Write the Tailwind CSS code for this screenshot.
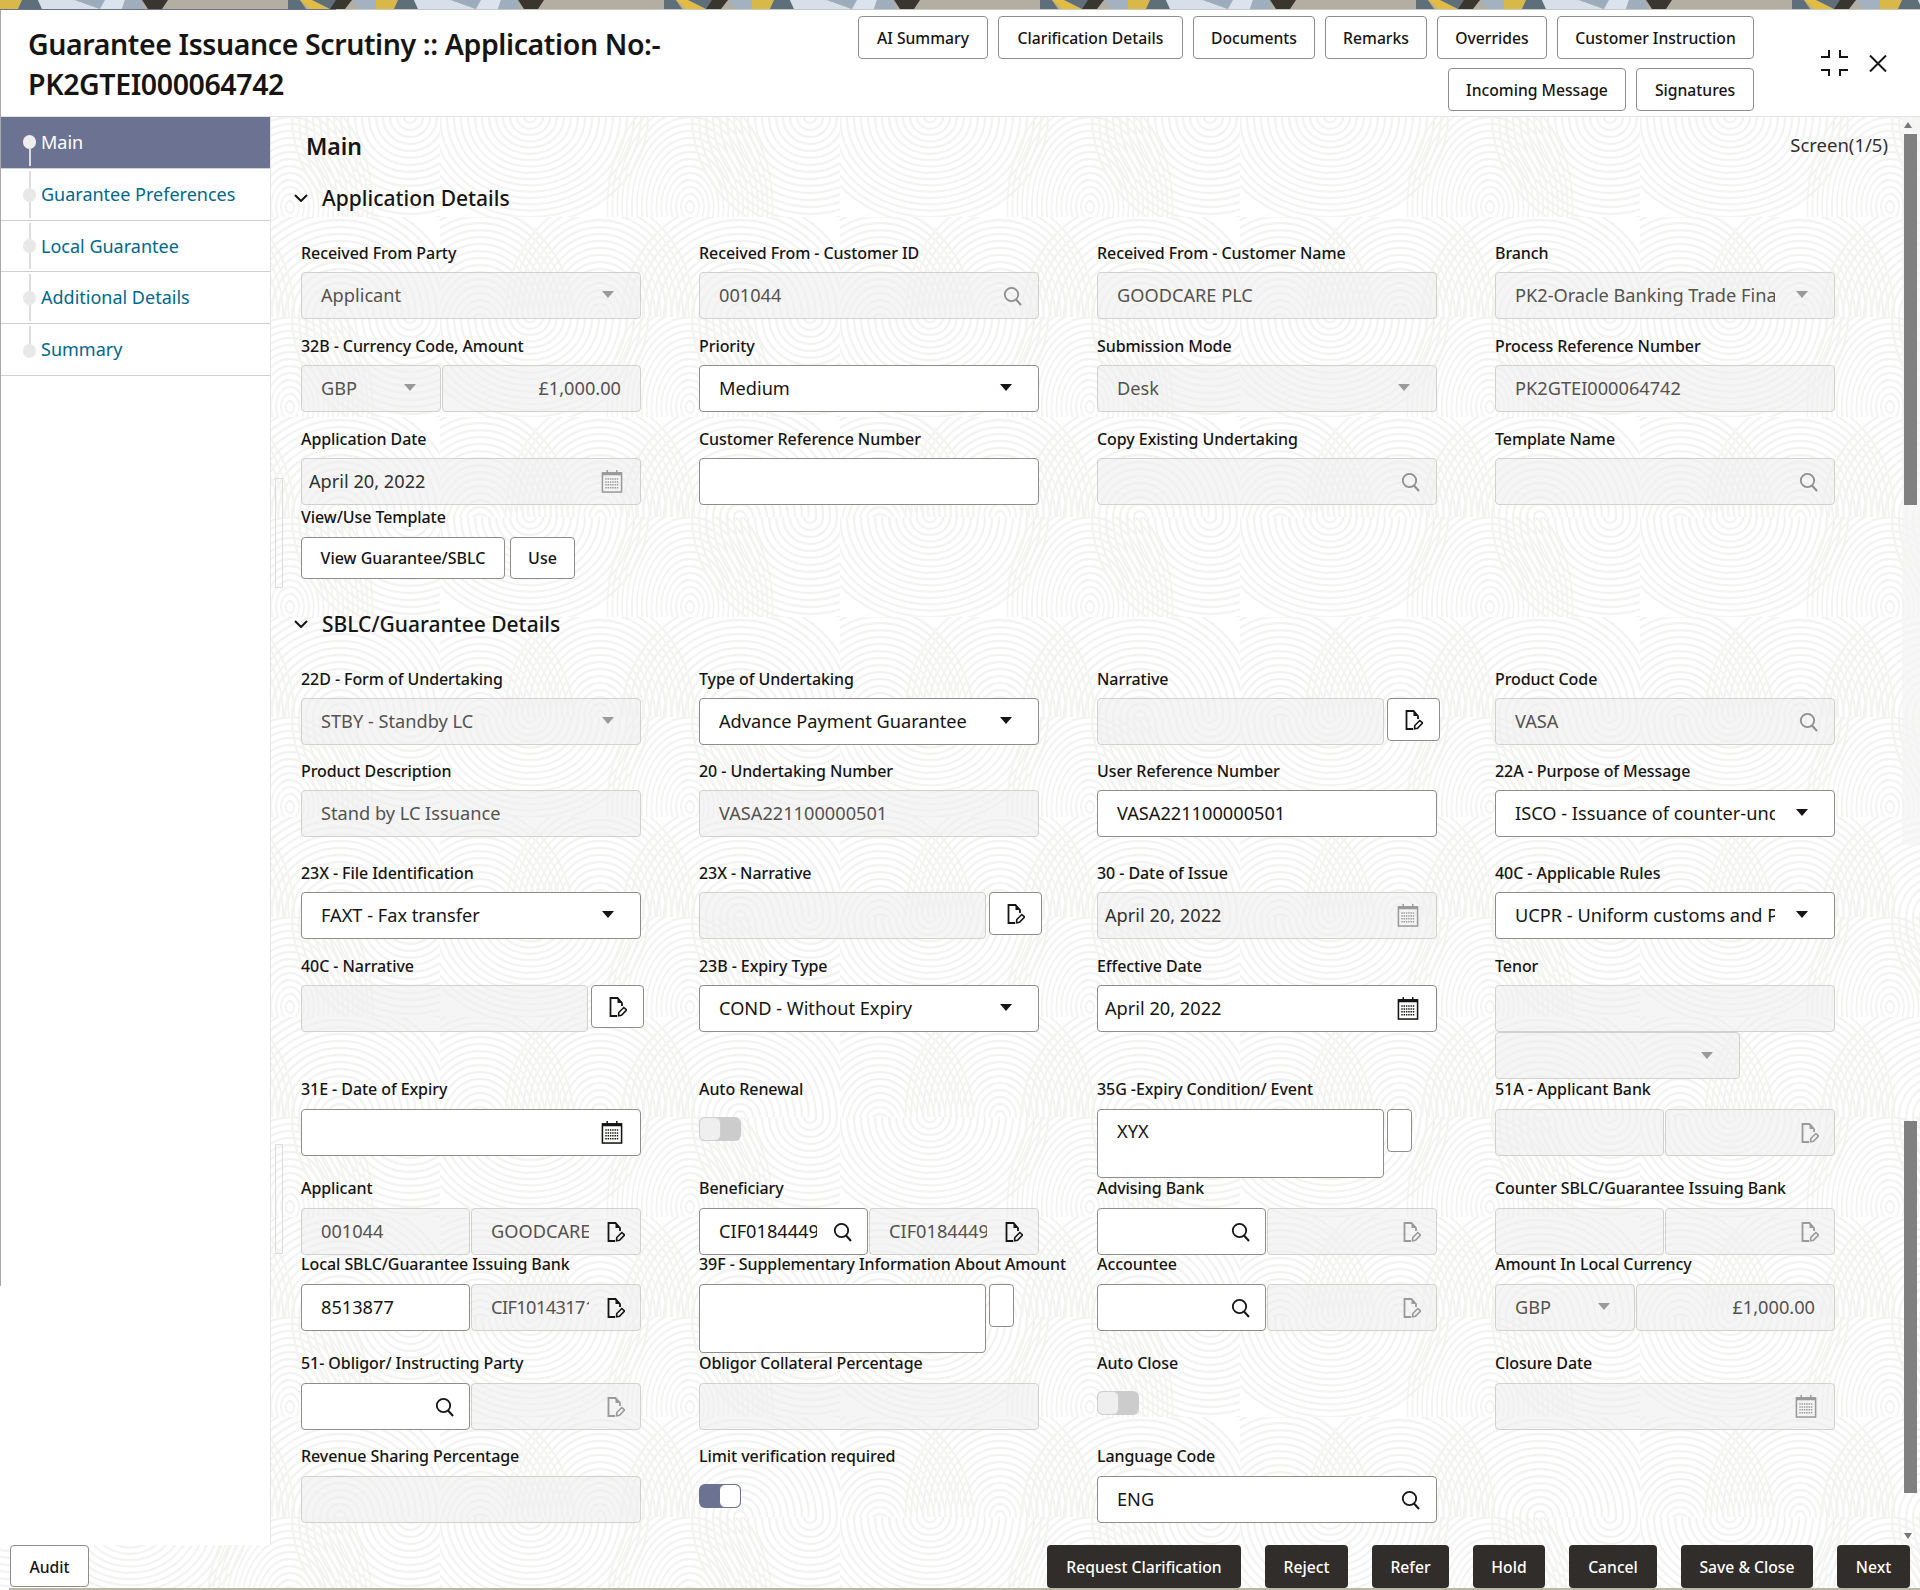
<!DOCTYPE html>
<html lang="en">
<head>
    <meta charset="UTF-8">
    <title>Guarantee Issuance Scrutiny</title>
    <script src="https://cdn.jsdelivr.net/npm/@tailwindcss/browser@4"></script>
</head>
<body class="relative w-[1920px] h-[1590px] overflow-hidden bg-white text-[#161513] font-['Noto_Sans','Open_Sans',sans-serif]">

    <!-- Shared icons and the background pattern -->
    <svg class="absolute left-0 top-0 w-[1920px] h-[1590px]" aria-hidden="true">
        <defs>
            <g id="whorl" fill="none" stroke="#f3f3f2" stroke-width="2.4">
                <circle r="6"/><circle r="13"/><circle r="20"/><circle r="27"/><circle r="34"/><circle r="41"/><circle r="48"/><circle r="55"/><circle r="62"/><circle r="69"/><circle r="76"/><circle r="83"/><circle r="90"/><circle r="97"/><circle r="104"/><circle r="111"/><circle r="118"/>
            </g>
            <pattern id="prints" width="400" height="200" patternUnits="userSpaceOnUse" patternTransform="translate(40 17)">
                <svg x="0" y="0" width="400" height="100">
                    <use href="#whorl" transform="translate(40 110) scale(.8 1)"/>
                    <use href="#whorl" transform="translate(160 100) scale(.8 1)"/>
                    <use href="#whorl" transform="translate(300 100)"/>
                </svg>
                <svg x="0" y="100" width="400" height="100">
                    <use href="#whorl" transform="translate(90 0) scale(1 .9)"/>
                    <use href="#whorl" transform="translate(250 90) scale(.7 1)"/>
                    <use href="#whorl" transform="translate(370 0)"/>
                </svg>
            </pattern>
            <pattern id="strip" width="376" height="9" patternUnits="userSpaceOnUse">
                <rect width="376" height="9" fill="#b3ada2"/>
                <polygon points="0,0 22,0 18,9 0,9" fill="#d9b84a"/>
                <polygon points="22,0 38,0 42,9 18,9" fill="#5f6f7a"/>
                <polygon points="38,0 75,0 100,9 42,9" fill="#d6dfea"/>
                <polygon points="75,0 105,0 105,5 100,9" fill="#9cacba"/>
                <polygon points="105,0 125,0 122,9 100,9" fill="#dbe3ee"/>
                <polygon points="125,0 142,0 142,9 122,9" fill="#9eaebc"/>
                <polygon points="142,0 168,0 162,9 148,9" fill="#39352f"/>
                <polygon points="288,0 300,0 306,9 288,9" fill="#5f6f7a"/>
                <polygon points="300,0 312,0 330,9 310,9" fill="#e2bd44"/>
                <polygon points="312,0 336,0 336,9 330,9" fill="#5f6f7a"/>
                <polygon points="336,0 352,0 345,9 330,9" fill="#39352f"/>
                <polygon points="352,0 376,0 376,9 360,9" fill="#a3b2c0"/>
            </pattern>
            <symbol id="search" viewBox="0 0 20 20"><circle cx="8.5" cy="8.5" r="6.7" fill="none" stroke="currentColor" stroke-width="1.8"/><path d="M13 13.5 18 19" fill="none" stroke="currentColor" stroke-width="2"/></symbol>
            <symbol id="calendar" viewBox="0 0 22 24"><path d="M6 0v5M16 0v5" stroke="currentColor" stroke-width="1.5"/><rect x="1" y="3" width="20" height="20" fill="none" stroke="currentColor" stroke-width="1.6"/><path d="M1 4h20" stroke="currentColor" stroke-width="3"/><path d="M4 9.500h14M4 12.500h14M4 15.500h14M4 18.500h14" stroke="currentColor" stroke-width="1.600" stroke-dasharray="1.500 .9"/></symbol>
            <symbol id="docedit" viewBox="0 0 18 20"><path d="M8 19H1.500V1H8.500L13 6V9" fill="none" stroke="currentColor" stroke-width="1.800"/><path d="M8.500 1 13 6H8.500Z" fill="currentColor"/><path d="M9.500 18.800 9.800 15.500 14.800 10.500 17.500 13 12.500 18.300Z" fill="none" stroke="currentColor" stroke-width="1.600"/></symbol>
        </defs>
        <rect width="1920" height="1590" fill="url(#prints)"/>
    </svg>

    <!-- Banner strip -->
    <svg class="relative block w-[1920px] h-[9px]" aria-hidden="true"><rect width="1920" height="9" fill="url(#strip)"/></svg>
    <div class="relative flex h-px"><div class="w-[336px] bg-[#6b7292]"></div><div class="flex-1 bg-[#c8c8c8]"></div></div>

    <!-- Header -->
    <header class="relative flex h-[107px] border-b border-[#e4e4e4] bg-white">
        <h1 class="w-[680px] pl-[28px] pt-[14px] text-[28.5px] leading-[40px] font-semibold tracking-[-0.4px]">Guarantee Issuance Scrutiny :: Application No:- PK2GTEI000064742</h1>
        <div class="flex w-[1074px] flex-wrap content-start justify-end gap-x-[10px] gap-y-[9px] pt-[6px] text-[15.7px] font-medium">
            <button class="h-[43px] w-[130px] rounded-[4px] border border-[#8f8c89] bg-white pt-[2px]">AI Summary</button>
            <button class="h-[43px] w-[185px] rounded-[4px] border border-[#8f8c89] bg-white pt-[2px]">Clarification Details</button>
            <button class="h-[43px] w-[122px] rounded-[4px] border border-[#8f8c89] bg-white pt-[2px]">Documents</button>
            <button class="h-[43px] w-[102px] rounded-[4px] border border-[#8f8c89] bg-white pt-[2px]">Remarks</button>
            <button class="h-[43px] w-[110px] rounded-[4px] border border-[#8f8c89] bg-white pt-[2px]">Overrides</button>
            <button class="h-[43px] w-[197px] rounded-[4px] border border-[#8f8c89] bg-white pt-[2px]">Customer Instruction</button>
            <button class="h-[43px] w-[178px] rounded-[4px] border border-[#8f8c89] bg-white pt-[2px]">Incoming Message</button>
            <button class="h-[43px] w-[118px] rounded-[4px] border border-[#8f8c89] bg-white pt-[2px]">Signatures</button>
        </div>
        <div class="flex flex-1 items-start gap-[21px] pl-[67px] pt-[40px]">
            <svg class="h-[26px] w-[27px]" viewBox="0 0 27 26" fill="none" stroke="#161513" stroke-width="2"><path d="M0 7H8V0M19 0V7H27M0 20H8V26M19 26V20H27"/></svg>
            <svg class="mt-[5px] h-[17px] w-[18px]" viewBox="0 0 18 17" fill="none" stroke="#161513" stroke-width="2"><path d="M1 0.500 17 16.500M17 0.500 1 16.500"/></svg>
        </div>
    </header>

    <div class="relative flex h-[1428px]">
        <!-- Sidebar -->
        <aside class="w-[271px] shrink-0 border-r border-[#e2e5ea] bg-white text-[18px]">
            <div class="flex h-[52px] items-stretch border-b border-[#cfcfcf] bg-[#6b7292] text-white">
                <div class="ml-[23px] mr-[5px] flex w-[13px] flex-col items-center"><div class="flex-1"></div><div class="h-[14px] w-[13px] rounded-full bg-[#eeeeee]"></div><div class="mb-[2px] w-[2px] flex-1 bg-[#dddddd]"></div></div>
                <div class="flex items-center">Main</div>
            </div>
            <div class="flex h-[52px] items-stretch border-b border-[#cfcfcf] text-[#00688c]">
                <div class="ml-[23px] mr-[5px] flex w-[13px] flex-col items-center"><div class="mt-[2px] w-[2px] flex-1 bg-[#dddddd]"></div><div class="h-[14px] w-[13px] rounded-full bg-[#e8e8e8]"></div><div class="mb-[2px] w-[2px] flex-1 bg-[#dddddd]"></div></div>
                <div class="flex items-center">Guarantee Preferences</div>
            </div>
            <div class="flex h-[51px] items-stretch border-b border-[#cfcfcf] text-[#00688c]">
                <div class="ml-[23px] mr-[5px] flex w-[13px] flex-col items-center"><div class="mt-[2px] w-[2px] flex-1 bg-[#dddddd]"></div><div class="h-[14px] w-[13px] rounded-full bg-[#e8e8e8]"></div><div class="mb-[2px] w-[2px] flex-1 bg-[#dddddd]"></div></div>
                <div class="flex items-center">Local Guarantee</div>
            </div>
            <div class="flex h-[52px] items-stretch border-b border-[#cfcfcf] text-[#00688c]">
                <div class="ml-[23px] mr-[5px] flex w-[13px] flex-col items-center"><div class="mt-[2px] w-[2px] flex-1 bg-[#dddddd]"></div><div class="h-[14px] w-[13px] rounded-full bg-[#e8e8e8]"></div><div class="mb-[2px] w-[2px] flex-1 bg-[#dddddd]"></div></div>
                <div class="flex items-center">Additional Details</div>
            </div>
            <div class="flex h-[52px] items-stretch border-b border-[#cfcfcf] text-[#00688c]">
                <div class="ml-[23px] mr-[5px] flex w-[13px] flex-col items-center"><div class="mt-[2px] w-[2px] flex-1 bg-[#dddddd]"></div><div class="h-[14px] w-[13px] rounded-full bg-[#e8e8e8]"></div><div class="flex-1"></div></div>
                <div class="flex items-center">Summary</div>
            </div>
        </aside>

        <!-- Main form -->
        <main class="flex-1 overflow-hidden pl-[23px]">
            <div class="flex h-[60px] items-center justify-between pl-[12px] pr-[32px]">
                <h2 class="mb-[2px] text-[23px] font-semibold">Main</h2>
                <span class="mb-[4px] text-[18.5px] text-[#33302d]">Screen(1/5)</span>
            </div>
            <div class="mb-[24px] flex h-[42px] items-center gap-[14px]">
                <svg class="h-[8px] w-[14px]" viewBox="0 0 14 8" fill="none" stroke="#161513" stroke-width="2"><path d="M1 1 7 7 13 1"/></svg>
                <h3 class="pt-[2px] text-[21px] font-medium">Application Details</h3>
            </div>

            <!-- Application details -->
            <div class="ml-[7px] grid h-[93px] grid-cols-[repeat(4,340px)] gap-x-[58px]">
                <div>
                    <div class="h-[29px] whitespace-nowrap text-[16px] leading-[20px] tracking-[-0.07px] font-medium">Received From Party</div>
                    <div class="flex h-[47px] items-center gap-[21px] rounded-[4px] border border-[#d2d1ce] bg-[#eeeeee]/60 pl-[19px] pr-[26px] text-[18.2px] text-[#55524f]"><div class="flex-1 overflow-hidden whitespace-nowrap">Applicant</div><svg class="h-[7px] w-[12px] text-[#9a9a9a] mb-[3px]" viewBox="0 0 12 7"><path d="M0 0H12L6 7Z" fill="currentColor"/></svg></div>
                </div>
                <div>
                    <div class="h-[29px] whitespace-nowrap text-[16px] leading-[20px] tracking-[-0.07px] font-medium">Received From - Customer ID</div>
                    <div class="flex h-[47px] items-center gap-[10px] rounded-[4px] border border-[#d2d1ce] bg-[#eeeeee]/60 pl-[19px] pr-[15px] text-[18.2px] text-[#55524f]"><div class="flex-1 overflow-hidden whitespace-nowrap">001044</div><svg class="h-[20px] w-[20px] text-[#8e8e8e]"><use href="#search"/></svg></div>
                </div>
                <div>
                    <div class="h-[29px] whitespace-nowrap text-[16px] leading-[20px] tracking-[-0.07px] font-medium">Received From - Customer Name</div>
                    <div class="flex h-[47px] items-center rounded-[4px] border border-[#d2d1ce] bg-[#eeeeee]/60 pl-[19px] text-[18.2px] text-[#55524f]">GOODCARE PLC</div>
                </div>
                <div>
                    <div class="h-[29px] whitespace-nowrap text-[16px] leading-[20px] tracking-[-0.07px] font-medium">Branch</div>
                    <div class="flex h-[47px] items-center gap-[21px] rounded-[4px] border border-[#d2d1ce] bg-[#eeeeee]/60 pl-[19px] pr-[26px] text-[18.2px] text-[#55524f]"><div class="flex-1 overflow-hidden whitespace-nowrap">PK2-Oracle Banking Trade Finance</div><svg class="h-[7px] w-[12px] text-[#9a9a9a] mb-[3px]" viewBox="0 0 12 7"><path d="M0 0H12L6 7Z" fill="currentColor"/></svg></div>
                </div>
            </div>

            <div class="ml-[7px] grid h-[93px] grid-cols-[repeat(4,340px)] gap-x-[58px]">
                <div>
                    <div class="h-[29px] whitespace-nowrap text-[16px] leading-[20px] tracking-[-0.07px] font-medium">32B - Currency Code, Amount</div>
                    <div class="flex gap-px">
                        <div class="flex h-[47px] w-[140px] shrink-0 items-center gap-[10px] rounded-[4px] border border-[#d2d1ce] bg-[#eeeeee]/60 pl-[19px] pr-[24px] text-[18.2px] text-[#55524f]"><div class="flex-1">GBP</div><svg class="h-[7px] w-[12px] text-[#9a9a9a] mb-[3px]" viewBox="0 0 12 7"><path d="M0 0H12L6 7Z" fill="currentColor"/></svg></div>
                        <div class="flex h-[47px] min-w-0 flex-1 items-center justify-end rounded-[4px] border border-[#d2d1ce] bg-[#eeeeee]/60 pr-[19px] text-[18.2px] text-[#55524f]">£1,000.00</div>
                    </div>
                </div>
                <div>
                    <div class="h-[29px] whitespace-nowrap text-[16px] leading-[20px] tracking-[-0.07px] font-medium">Priority</div>
                    <div class="flex h-[47px] items-center gap-[21px] rounded-[4px] border border-[#8f8c89] bg-white pl-[19px] pr-[26px] text-[18.2px]"><div class="flex-1 overflow-hidden whitespace-nowrap">Medium</div><svg class="h-[7px] w-[12px] text-[#161513] mb-[3px]" viewBox="0 0 12 7"><path d="M0 0H12L6 7Z" fill="currentColor"/></svg></div>
                </div>
                <div>
                    <div class="h-[29px] whitespace-nowrap text-[16px] leading-[20px] tracking-[-0.07px] font-medium">Submission Mode</div>
                    <div class="flex h-[47px] items-center gap-[21px] rounded-[4px] border border-[#d2d1ce] bg-[#eeeeee]/60 pl-[19px] pr-[26px] text-[18.2px] text-[#55524f]"><div class="flex-1 overflow-hidden whitespace-nowrap">Desk</div><svg class="h-[7px] w-[12px] text-[#9a9a9a] mb-[3px]" viewBox="0 0 12 7"><path d="M0 0H12L6 7Z" fill="currentColor"/></svg></div>
                </div>
                <div>
                    <div class="h-[29px] whitespace-nowrap text-[16px] leading-[20px] tracking-[-0.07px] font-medium">Process Reference Number</div>
                    <div class="flex h-[47px] items-center rounded-[4px] border border-[#d2d1ce] bg-[#eeeeee]/60 pl-[19px] text-[18.2px] text-[#55524f]">PK2GTEI000064742</div>
                </div>
            </div>

            <div class="ml-[7px] grid h-[79px] grid-cols-[repeat(4,340px)] gap-x-[58px]">
                <div>
                    <div class="h-[29px] whitespace-nowrap text-[16px] leading-[20px] tracking-[-0.07px] font-medium">Application Date</div>
                    <div class="flex h-[47px] items-center rounded-[4px] border border-[#d2d1ce] bg-[#eeeeee]/60 pl-[7px] pr-[17px] text-[18.2px] text-[#33302d]"><div class="flex-1">April 20, 2022</div><svg class="h-[23px] w-[22px] text-[#9a9a9a]"><use href="#calendar"/></svg></div>
                </div>
                <div>
                    <div class="h-[29px] whitespace-nowrap text-[16px] leading-[20px] tracking-[-0.07px] font-medium">Customer Reference Number</div>
                    <div class="h-[47px] rounded-[4px] border border-[#8f8c89] bg-white"></div>
                </div>
                <div>
                    <div class="h-[29px] whitespace-nowrap text-[16px] leading-[20px] tracking-[-0.07px] font-medium">Copy Existing Undertaking</div>
                    <div class="flex h-[47px] items-center justify-end rounded-[4px] border border-[#d2d1ce] bg-[#eeeeee]/60 pr-[15px]"><svg class="h-[20px] w-[20px] text-[#8e8e8e]"><use href="#search"/></svg></div>
                </div>
                <div>
                    <div class="h-[29px] whitespace-nowrap text-[16px] leading-[20px] tracking-[-0.07px] font-medium">Template Name</div>
                    <div class="flex h-[47px] items-center justify-end rounded-[4px] border border-[#d2d1ce] bg-[#eeeeee]/60 pr-[15px]"><svg class="h-[20px] w-[20px] text-[#8e8e8e]"><use href="#search"/></svg></div>
                </div>
            </div>

            <div class="ml-[7px] h-[71px]">
                <div class="h-[29px] whitespace-nowrap text-[16px] leading-[18px] tracking-[-0.07px] font-medium">View/Use Template</div>
                <div class="flex gap-[5px] text-[16px] font-medium">
                    <button class="h-[42px] w-[204px] rounded-[4px] border border-[#8f8c89] bg-white">View Guarantee/SBLC</button>
                    <button class="h-[42px] w-[65px] rounded-[4px] border border-[#8f8c89] bg-white">Use</button>
                </div>
            </div>

            <div class="mb-[24px] mt-[24px] flex h-[42px] items-center gap-[14px]">
                <svg class="h-[8px] w-[14px]" viewBox="0 0 14 8" fill="none" stroke="#161513" stroke-width="2"><path d="M1 1 7 7 13 1"/></svg>
                <h3 class="pt-[2px] text-[21px] font-medium">SBLC/Guarantee Details</h3>
            </div>

            <!-- SBLC details -->
            <div class="ml-[7px] grid h-[92px] grid-cols-[repeat(4,340px)] gap-x-[58px]">
                <div>
                    <div class="h-[29px] whitespace-nowrap text-[16px] leading-[20px] tracking-[-0.07px] font-medium">22D - Form of Undertaking</div>
                    <div class="flex h-[47px] items-center gap-[21px] rounded-[4px] border border-[#d2d1ce] bg-[#eeeeee]/60 pl-[19px] pr-[26px] text-[18.2px] text-[#55524f]"><div class="flex-1 overflow-hidden whitespace-nowrap">STBY - Standby LC</div><svg class="h-[7px] w-[12px] text-[#9a9a9a] mb-[3px]" viewBox="0 0 12 7"><path d="M0 0H12L6 7Z" fill="currentColor"/></svg></div>
                </div>
                <div>
                    <div class="h-[29px] whitespace-nowrap text-[16px] leading-[20px] tracking-[-0.07px] font-medium">Type of Undertaking</div>
                    <div class="flex h-[47px] items-center gap-[21px] rounded-[4px] border border-[#8f8c89] bg-white pl-[19px] pr-[26px] text-[18.2px]"><div class="flex-1 overflow-hidden whitespace-nowrap">Advance Payment Guarantee</div><svg class="h-[7px] w-[12px] text-[#161513] mb-[3px]" viewBox="0 0 12 7"><path d="M0 0H12L6 7Z" fill="currentColor"/></svg></div>
                </div>
                <div>
                    <div class="h-[29px] whitespace-nowrap text-[16px] leading-[20px] tracking-[-0.07px] font-medium">Narrative</div>
                    <div class="flex items-start gap-[3px]">
                        <div class="h-[47px] w-[287px] shrink-0 rounded-[4px] border border-[#d2d1ce] bg-[#eeeeee]/60"></div>
                        <button class="flex h-[43px] w-[53px] shrink-0 items-center justify-center rounded-[4px] border border-[#8f8c89] bg-white"><svg class="h-[20px] w-[18px]"><use href="#docedit"/></svg></button>
                    </div>
                </div>
                <div>
                    <div class="h-[29px] whitespace-nowrap text-[16px] leading-[20px] tracking-[-0.07px] font-medium">Product Code</div>
                    <div class="flex h-[47px] items-center gap-[10px] rounded-[4px] border border-[#d2d1ce] bg-[#eeeeee]/60 pl-[19px] pr-[15px] text-[18.2px] text-[#55524f]"><div class="flex-1">VASA</div><svg class="h-[20px] w-[20px] text-[#8e8e8e]"><use href="#search"/></svg></div>
                </div>
            </div>

            <div class="ml-[7px] grid h-[102px] grid-cols-[repeat(4,340px)] gap-x-[58px]">
                <div>
                    <div class="h-[29px] whitespace-nowrap text-[16px] leading-[20px] tracking-[-0.07px] font-medium">Product Description</div>
                    <div class="flex h-[47px] items-center rounded-[4px] border border-[#d2d1ce] bg-[#eeeeee]/60 pl-[19px] text-[18.2px] text-[#55524f]">Stand by LC Issuance</div>
                </div>
                <div>
                    <div class="h-[29px] whitespace-nowrap text-[16px] leading-[20px] tracking-[-0.07px] font-medium">20 - Undertaking Number</div>
                    <div class="flex h-[47px] items-center rounded-[4px] border border-[#d2d1ce] bg-[#eeeeee]/60 pl-[19px] text-[18.2px] text-[#55524f]">VASA221100000501</div>
                </div>
                <div>
                    <div class="h-[29px] whitespace-nowrap text-[16px] leading-[20px] tracking-[-0.07px] font-medium">User Reference Number</div>
                    <div class="flex h-[47px] items-center rounded-[4px] border border-[#8f8c89] bg-white pl-[19px] text-[18.2px]">VASA221100000501</div>
                </div>
                <div>
                    <div class="h-[29px] whitespace-nowrap text-[16px] leading-[20px] tracking-[-0.07px] font-medium">22A - Purpose of Message</div>
                    <div class="flex h-[47px] items-center gap-[21px] rounded-[4px] border border-[#8f8c89] bg-white pl-[19px] pr-[26px] text-[18.2px]"><div class="flex-1 overflow-hidden whitespace-nowrap">ISCO - Issuance of counter-undertaking</div><svg class="h-[7px] w-[12px] text-[#161513] mb-[3px]" viewBox="0 0 12 7"><path d="M0 0H12L6 7Z" fill="currentColor"/></svg></div>
                </div>
            </div>

            <div class="ml-[7px] grid h-[93px] grid-cols-[repeat(4,340px)] gap-x-[58px]">
                <div>
                    <div class="h-[29px] whitespace-nowrap text-[16px] leading-[20px] tracking-[-0.07px] font-medium">23X - File Identification</div>
                    <div class="flex h-[47px] items-center gap-[21px] rounded-[4px] border border-[#8f8c89] bg-white pl-[19px] pr-[26px] text-[18.2px]"><div class="flex-1 overflow-hidden whitespace-nowrap">FAXT - Fax transfer</div><svg class="h-[7px] w-[12px] text-[#161513] mb-[3px]" viewBox="0 0 12 7"><path d="M0 0H12L6 7Z" fill="currentColor"/></svg></div>
                </div>
                <div>
                    <div class="h-[29px] whitespace-nowrap text-[16px] leading-[20px] tracking-[-0.07px] font-medium">23X - Narrative</div>
                    <div class="flex items-start gap-[3px]">
                        <div class="h-[47px] w-[287px] shrink-0 rounded-[4px] border border-[#d2d1ce] bg-[#eeeeee]/60"></div>
                        <button class="flex h-[43px] w-[53px] shrink-0 items-center justify-center rounded-[4px] border border-[#8f8c89] bg-white"><svg class="h-[20px] w-[18px]"><use href="#docedit"/></svg></button>
                    </div>
                </div>
                <div>
                    <div class="h-[29px] whitespace-nowrap text-[16px] leading-[20px] tracking-[-0.07px] font-medium">30 - Date of Issue</div>
                    <div class="flex h-[47px] items-center rounded-[4px] border border-[#d2d1ce] bg-[#eeeeee]/60 pl-[7px] pr-[17px] text-[18.2px] text-[#33302d]"><div class="flex-1">April 20, 2022</div><svg class="h-[23px] w-[22px] text-[#9a9a9a]"><use href="#calendar"/></svg></div>
                </div>
                <div>
                    <div class="h-[29px] whitespace-nowrap text-[16px] leading-[20px] tracking-[-0.07px] font-medium">40C - Applicable Rules</div>
                    <div class="flex h-[47px] items-center gap-[21px] rounded-[4px] border border-[#8f8c89] bg-white pl-[19px] pr-[26px] text-[18.2px]"><div class="flex-1 overflow-hidden whitespace-nowrap">UCPR - Uniform customs and Practice</div><svg class="h-[7px] w-[12px] text-[#161513] mb-[3px]" viewBox="0 0 12 7"><path d="M0 0H12L6 7Z" fill="currentColor"/></svg></div>
                </div>
            </div>

            <div class="ml-[7px] grid h-[124px] grid-cols-[repeat(4,340px)] gap-x-[58px]">
                <div>
                    <div class="h-[29px] whitespace-nowrap text-[16px] leading-[20px] tracking-[-0.07px] font-medium">40C - Narrative</div>
                    <div class="flex items-start gap-[3px]">
                        <div class="h-[47px] w-[287px] shrink-0 rounded-[4px] border border-[#d2d1ce] bg-[#eeeeee]/60"></div>
                        <button class="flex h-[43px] w-[53px] shrink-0 items-center justify-center rounded-[4px] border border-[#8f8c89] bg-white"><svg class="h-[20px] w-[18px]"><use href="#docedit"/></svg></button>
                    </div>
                </div>
                <div>
                    <div class="h-[29px] whitespace-nowrap text-[16px] leading-[20px] tracking-[-0.07px] font-medium">23B - Expiry Type</div>
                    <div class="flex h-[47px] items-center gap-[21px] rounded-[4px] border border-[#8f8c89] bg-white pl-[19px] pr-[26px] text-[18.2px]"><div class="flex-1 overflow-hidden whitespace-nowrap">COND - Without Expiry</div><svg class="h-[7px] w-[12px] text-[#161513] mb-[3px]" viewBox="0 0 12 7"><path d="M0 0H12L6 7Z" fill="currentColor"/></svg></div>
                </div>
                <div>
                    <div class="h-[29px] whitespace-nowrap text-[16px] leading-[20px] tracking-[-0.07px] font-medium">Effective Date</div>
                    <div class="flex h-[47px] items-center rounded-[4px] border border-[#8f8c89] bg-white pl-[7px] pr-[17px] text-[18.2px]"><div class="flex-1">April 20, 2022</div><svg class="h-[23px] w-[22px]"><use href="#calendar"/></svg></div>
                </div>
                <div>
                    <div class="h-[29px] whitespace-nowrap text-[16px] leading-[20px] tracking-[-0.07px] font-medium">Tenor</div>
                    <div class="h-[47px] rounded-[4px] border border-[#d2d1ce] bg-[#eeeeee]/60"></div>
                    <div class="flex h-[47px] w-[245px] items-center justify-end rounded-[4px] border border-[#d2d1ce] bg-[#eeeeee]/60 pr-[26px]"><svg class="h-[7px] w-[12px] text-[#9a9a9a]" viewBox="0 0 12 7"><path d="M0 0H12L6 7Z" fill="currentColor"/></svg></div>
                </div>
            </div>

            <div class="ml-[7px] grid h-[99px] grid-cols-[repeat(4,340px)] gap-x-[58px]">
                <div>
                    <div class="h-[29px] whitespace-nowrap text-[16px] leading-[18px] tracking-[-0.07px] font-medium">31E - Date of Expiry</div>
                    <div class="flex h-[47px] items-center justify-end rounded-[4px] border border-[#8f8c89] bg-white pr-[17px]"><svg class="h-[23px] w-[22px]"><use href="#calendar"/></svg></div>
                </div>
                <div>
                    <div class="h-[29px] whitespace-nowrap text-[16px] leading-[18px] tracking-[-0.07px] font-medium">Auto Renewal</div>
                    <div class="mt-[8px] flex h-[24px] w-[42px] rounded-[6px] bg-[#cccccc]"><div class="h-[24px] w-[22px] rounded-[6px] border border-[#cfcfcf] bg-[#efefef]"></div></div>
                </div>
                <div>
                    <div class="h-[29px] whitespace-nowrap text-[16px] leading-[18px] tracking-[-0.07px] font-medium">35G -Expiry Condition/ Event</div>
                    <div class="flex items-start gap-[3px]">
                        <div class="h-[69px] w-[287px] shrink-0 rounded-[4px] border border-[#8f8c89] bg-white pl-[19px] pt-[8px] text-[18.2px]">XYX</div>
                        <button class="h-[43px] w-[25px] shrink-0 rounded-[4px] border border-[#8f8c89] bg-white"></button>
                    </div>
                </div>
                <div>
                    <div class="h-[29px] whitespace-nowrap text-[16px] leading-[18px] tracking-[-0.07px] font-medium">51A - Applicant Bank</div>
                    <div class="flex gap-px">
                        <div class="h-[47px] w-[169px] shrink-0 rounded-[4px] border border-[#d2d1ce] bg-[#eeeeee]/60"></div>
                        <div class="flex h-[47px] min-w-0 flex-1 items-center justify-end rounded-[4px] border border-[#d2d1ce] bg-[#eeeeee]/60 pr-[15px]"><svg class="h-[20px] w-[18px] text-[#9a9a9a]"><use href="#docedit"/></svg></div>
                    </div>
                </div>
            </div>

            <div class="ml-[7px] grid h-[76px] grid-cols-[repeat(4,340px)] gap-x-[58px]">
                <div>
                    <div class="h-[29px] whitespace-nowrap text-[16px] leading-[18px] tracking-[-0.07px] font-medium">Applicant</div>
                    <div class="flex gap-px">
                        <div class="flex h-[47px] w-[169px] shrink-0 items-center rounded-[4px] border border-[#d2d1ce] bg-[#eeeeee]/60 pl-[19px] text-[18.2px] text-[#55524f]">001044</div>
                        <div class="flex h-[47px] min-w-0 flex-1 items-center gap-[18px] rounded-[4px] border border-[#d2d1ce] bg-[#eeeeee]/60 pl-[19px] pr-[15px] text-[18.2px] text-[#55524f]"><div class="min-w-0 flex-1 overflow-hidden whitespace-nowrap">GOODCARE PLC</div><svg class="h-[20px] w-[18px] shrink-0 text-[#161513]"><use href="#docedit"/></svg></div>
                    </div>
                </div>
                <div>
                    <div class="h-[29px] whitespace-nowrap text-[16px] leading-[18px] tracking-[-0.07px] font-medium">Beneficiary</div>
                    <div class="flex gap-px">
                        <div class="flex h-[47px] w-[169px] shrink-0 items-center gap-[16px] rounded-[4px] border border-[#8f8c89] bg-white pl-[19px] pr-[14px] text-[18.2px]"><div class="min-w-0 flex-1 overflow-hidden whitespace-nowrap">CIF0184449</div><svg class="h-[20px] w-[20px] shrink-0"><use href="#search"/></svg></div>
                        <div class="flex h-[47px] min-w-0 flex-1 items-center gap-[18px] rounded-[4px] border border-[#d2d1ce] bg-[#eeeeee]/60 pl-[19px] pr-[15px] text-[18.2px] text-[#55524f]"><div class="min-w-0 flex-1 overflow-hidden whitespace-nowrap">CIF0184449</div><svg class="h-[20px] w-[18px] shrink-0 text-[#161513]"><use href="#docedit"/></svg></div>
                    </div>
                </div>
                <div>
                    <div class="h-[29px] whitespace-nowrap text-[16px] leading-[18px] tracking-[-0.07px] font-medium">Advising Bank</div>
                    <div class="flex gap-px">
                        <div class="flex h-[47px] w-[169px] shrink-0 items-center justify-end rounded-[4px] border border-[#8f8c89] bg-white pr-[14px]"><svg class="h-[20px] w-[20px]"><use href="#search"/></svg></div>
                        <div class="flex h-[47px] min-w-0 flex-1 items-center justify-end rounded-[4px] border border-[#d2d1ce] bg-[#eeeeee]/60 pr-[15px]"><svg class="h-[20px] w-[18px] text-[#9a9a9a]"><use href="#docedit"/></svg></div>
                    </div>
                </div>
                <div>
                    <div class="h-[29px] whitespace-nowrap text-[16px] leading-[18px] tracking-[-0.07px] font-medium">Counter SBLC/Guarantee Issuing Bank</div>
                    <div class="flex gap-px">
                        <div class="h-[47px] w-[169px] shrink-0 rounded-[4px] border border-[#d2d1ce] bg-[#eeeeee]/60"></div>
                        <div class="flex h-[47px] min-w-0 flex-1 items-center justify-end rounded-[4px] border border-[#d2d1ce] bg-[#eeeeee]/60 pr-[15px]"><svg class="h-[20px] w-[18px] text-[#9a9a9a]"><use href="#docedit"/></svg></div>
                    </div>
                </div>
            </div>

            <div class="ml-[7px] grid h-[99px] grid-cols-[repeat(4,340px)] gap-x-[58px]">
                <div>
                    <div class="h-[29px] whitespace-nowrap text-[16px] leading-[18px] tracking-[-0.07px] font-medium">Local SBLC/Guarantee Issuing Bank</div>
                    <div class="flex gap-px">
                        <div class="flex h-[47px] w-[169px] shrink-0 items-center rounded-[4px] border border-[#8f8c89] bg-white pl-[19px] text-[18.2px]">8513877</div>
                        <div class="flex h-[47px] min-w-0 flex-1 items-center gap-[18px] rounded-[4px] border border-[#d2d1ce] bg-[#eeeeee]/60 pl-[19px] pr-[15px] text-[18.2px] text-[#55524f]"><div class="min-w-0 flex-1 overflow-hidden whitespace-nowrap tracking-[-0.6px]">CIF10143171</div><svg class="h-[20px] w-[18px] shrink-0 text-[#161513]"><use href="#docedit"/></svg></div>
                    </div>
                </div>
                <div>
                    <div class="h-[29px] whitespace-nowrap text-[16px] leading-[18px] tracking-[-0.07px] font-medium">39F - Supplementary Information About Amount</div>
                    <div class="flex items-start gap-[3px]">
                        <div class="h-[69px] w-[287px] shrink-0 rounded-[4px] border border-[#8f8c89] bg-white"></div>
                        <button class="h-[43px] w-[25px] shrink-0 rounded-[4px] border border-[#8f8c89] bg-white"></button>
                    </div>
                </div>
                <div>
                    <div class="h-[29px] whitespace-nowrap text-[16px] leading-[18px] tracking-[-0.07px] font-medium">Accountee</div>
                    <div class="flex gap-px">
                        <div class="flex h-[47px] w-[169px] shrink-0 items-center justify-end rounded-[4px] border border-[#8f8c89] bg-white pr-[14px]"><svg class="h-[20px] w-[20px]"><use href="#search"/></svg></div>
                        <div class="flex h-[47px] min-w-0 flex-1 items-center justify-end rounded-[4px] border border-[#d2d1ce] bg-[#eeeeee]/60 pr-[15px]"><svg class="h-[20px] w-[18px] text-[#9a9a9a]"><use href="#docedit"/></svg></div>
                    </div>
                </div>
                <div>
                    <div class="h-[29px] whitespace-nowrap text-[16px] leading-[18px] tracking-[-0.07px] font-medium">Amount In Local Currency</div>
                    <div class="flex gap-px">
                        <div class="flex h-[47px] w-[140px] shrink-0 items-center gap-[10px] rounded-[4px] border border-[#d2d1ce] bg-[#eeeeee]/60 pl-[19px] pr-[24px] text-[18.2px] text-[#55524f]"><div class="flex-1">GBP</div><svg class="h-[7px] w-[12px] text-[#9a9a9a] mb-[3px]" viewBox="0 0 12 7"><path d="M0 0H12L6 7Z" fill="currentColor"/></svg></div>
                        <div class="flex h-[47px] min-w-0 flex-1 items-center justify-end rounded-[4px] border border-[#d2d1ce] bg-[#eeeeee]/60 pr-[19px] text-[18.2px] text-[#55524f]">£1,000.00</div>
                    </div>
                </div>
            </div>

            <div class="ml-[7px] grid h-[93px] grid-cols-[repeat(4,340px)] gap-x-[58px]">
                <div>
                    <div class="h-[29px] whitespace-nowrap text-[16px] leading-[18px] tracking-[-0.07px] font-medium">51- Obligor/ Instructing Party</div>
                    <div class="flex gap-px">
                        <div class="flex h-[47px] w-[169px] shrink-0 items-center justify-end rounded-[4px] border border-[#8f8c89] bg-white pr-[14px]"><svg class="h-[20px] w-[20px]"><use href="#search"/></svg></div>
                        <div class="flex h-[47px] min-w-0 flex-1 items-center justify-end rounded-[4px] border border-[#d2d1ce] bg-[#eeeeee]/60 pr-[15px]"><svg class="h-[20px] w-[18px] text-[#9a9a9a]"><use href="#docedit"/></svg></div>
                    </div>
                </div>
                <div>
                    <div class="h-[29px] whitespace-nowrap text-[16px] leading-[18px] tracking-[-0.07px] font-medium">Obligor Collateral Percentage</div>
                    <div class="h-[47px] rounded-[4px] border border-[#d2d1ce] bg-[#eeeeee]/60"></div>
                </div>
                <div>
                    <div class="h-[29px] whitespace-nowrap text-[16px] leading-[18px] tracking-[-0.07px] font-medium">Auto Close</div>
                    <div class="mt-[8px] flex h-[24px] w-[42px] rounded-[6px] bg-[#cccccc]"><div class="h-[24px] w-[22px] rounded-[6px] border border-[#cfcfcf] bg-[#efefef]"></div></div>
                </div>
                <div>
                    <div class="h-[29px] whitespace-nowrap text-[16px] leading-[18px] tracking-[-0.07px] font-medium">Closure Date</div>
                    <div class="flex h-[47px] items-center justify-end rounded-[4px] border border-[#d2d1ce] bg-[#eeeeee]/60 pr-[17px]"><svg class="h-[23px] w-[22px] text-[#9a9a9a]"><use href="#calendar"/></svg></div>
                </div>
            </div>

            <div class="ml-[7px] grid h-[93px] grid-cols-[repeat(4,340px)] gap-x-[58px]">
                <div>
                    <div class="h-[29px] whitespace-nowrap text-[16px] leading-[18px] tracking-[-0.07px] font-medium">Revenue Sharing Percentage</div>
                    <div class="h-[47px] rounded-[4px] border border-[#d2d1ce] bg-[#eeeeee]/60"></div>
                </div>
                <div>
                    <div class="h-[29px] whitespace-nowrap text-[16px] leading-[18px] tracking-[-0.07px] font-medium">Limit verification required</div>
                    <div class="mt-[8px] flex h-[24px] w-[42px] justify-end rounded-[6px] bg-[#6b7292]"><div class="h-[24px] w-[22px] rounded-[6px] border border-[#6b7292] bg-white"></div></div>
                </div>
                <div>
                    <div class="h-[29px] whitespace-nowrap text-[16px] leading-[18px] tracking-[-0.07px] font-medium">Language Code</div>
                    <div class="flex h-[47px] items-center rounded-[4px] border border-[#8f8c89] bg-white pl-[19px] pr-[15px] text-[18.2px]"><div class="flex-1">ENG</div><svg class="h-[20px] w-[20px]"><use href="#search"/></svg></div>
                </div>
                <div></div>
            </div>
        </main>
    </div>

    <!-- Footer -->
    <footer class="relative flex h-[43px] items-start justify-between pl-[10px] pr-[10px] text-[15.7px] font-medium">
        <button class="h-[42px] w-[79px] rounded-[4px] border border-[#8f8c89] bg-white pt-[3px]">Audit</button>
        <div class="flex gap-[24px] text-white">
            <button class="h-[43px] w-[194px] rounded-[4px] bg-[#312d2a] pt-[2px]">Request Clarification</button>
            <button class="h-[43px] w-[83px] rounded-[4px] bg-[#312d2a] pt-[2px]">Reject</button>
            <button class="h-[43px] w-[77px] rounded-[4px] bg-[#312d2a] pt-[2px]">Refer</button>
            <button class="h-[43px] w-[72px] rounded-[4px] bg-[#312d2a] pt-[2px]">Hold</button>
            <button class="h-[43px] w-[88px] rounded-[4px] bg-[#312d2a] pt-[2px]">Cancel</button>
            <button class="h-[43px] w-[132px] rounded-[4px] bg-[#312d2a] pt-[2px]">Save &amp; Close</button>
            <button class="h-[43px] w-[73px] rounded-[4px] bg-[#312d2a] pt-[2px]">Next</button>
        </div>
    </footer>
    <div class="relative ml-[9px] h-[2px] bg-[#bdb8a6]"></div>

    <!-- Overlays: window edge, scrollbar and the stray resize handles -->
    <div class="absolute left-0 top-[10px] h-[1276px] w-px bg-[#a9a9a9]"></div>
    <div class="absolute left-[275px] top-[478px] h-[110px] w-[8px] border border-[#dddddd]"></div>
    <div class="absolute left-[275px] top-[1144px] h-[110px] w-[8px] border border-[#dddddd]"></div>
    <div class="absolute left-[1902px] top-[117px] h-[728px] w-[18px] bg-[#f3f3f3]/70"></div>
    <div class="absolute left-[1904px] top-[122px] h-0 w-0 border-x-[4px] border-b-[6px] border-x-transparent border-b-[#777777]"></div>
    <div class="absolute left-[1904px] top-[134px] h-[371px] w-[13px] bg-[#808080]"></div>
    <div class="absolute left-[1904px] top-[1121px] h-[372px] w-[13px] bg-[#808080]"></div>
    <div class="absolute left-[1904px] top-[1533px] h-0 w-0 border-x-[4px] border-t-[6px] border-x-transparent border-t-[#777777]"></div>
</body>
</html>
